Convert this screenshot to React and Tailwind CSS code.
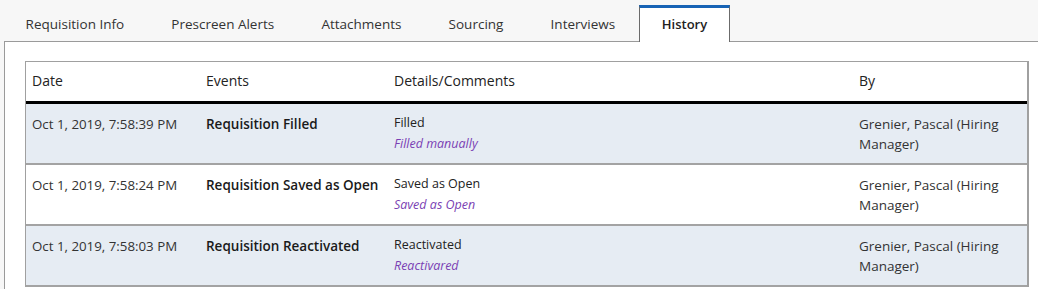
import React from "react";

const tabs = ["Requisition Info", "Prescreen Alerts", "Attachments", "Sourcing", "Interviews", "History"];

const rows = [
  { date: "Oct 1, 2019, 7:58:39 PM", event: "Requisition Filled", detail: "Filled", comment: "Filled manually", by: "Grenier, Pascal (Hiring Manager)", shade: true },
  { date: "Oct 1, 2019, 7:58:24 PM", event: "Requisition Saved as Open", detail: "Saved as Open", comment: "Saved as Open", by: "Grenier, Pascal (Hiring Manager)", shade: false },
  { date: "Oct 1, 2019, 7:58:03 PM", event: "Requisition Reactivated", detail: "Reactivated", comment: "Reactivared", by: "Grenier, Pascal (Hiring Manager)", shade: true },
];

export default function App() {
  return (
    <div className="w-[1038px] h-[289px] overflow-hidden bg-[#f7f7f7] font-['Open_Sans',sans-serif] text-[#333]">
      <div className="flex items-end h-[41px] pl-[2px]">
        {tabs.map((t) =>
          t === "History" ? (
            <div
              key={t}
              className="relative z-10 -mb-px h-[37px] flex items-center px-[22px] bg-white border-t-[3px] border-t-[#1763b5] border-x border-x-[#6b6b6b] text-[13px] font-semibold text-[#222]"
            >
              {t}
            </div>
          ) : (
            <div key={t} className="h-[36px] flex items-center px-[23.6px] pt-[3px] text-[13.5px] text-[#333]">
              {t}
            </div>
          )
        )}
      </div>
      <div className="ml-[4px] h-[260px] bg-white border-t border-l border-[#9a9a9a] pt-[19px] pl-[20px]">
        <div className="w-[1004px] border-t border-l border-r-2 border-[#a0a0a0] bg-white">
          <div className="grid grid-cols-[173px_188px_465px_175px] h-[42px] border-b-[3px] border-black text-[14px] text-[#222] leading-[20px] pt-[9px]">
            <div className="pl-[6px]">Date</div>
            <div className="pl-[7px]">Events</div>
            <div className="pl-[7px]">Details/Comments</div>
            <div className="pl-[7px]">By</div>
          </div>
          {rows.map((r, i) => (
            <div
              key={i}
              className={`grid grid-cols-[173px_188px_465px_175px] h-[61px] border-b-2 border-[#a3a3a3] pt-[10px] ${r.shade ? "bg-[#e6ecf3]" : "bg-white"}`}
            >
              <div className="pl-[6px] text-[13.3px] leading-[20px] text-[#333]">{r.date}</div>
              <div className="pl-[7px] text-[13.5px] leading-[20px] font-semibold text-[#1a1a1a] whitespace-nowrap">{r.event}</div>
              <div className="pl-[7px] pt-px text-[12.5px]">
                <div className="leading-[16px] text-[#222]">{r.detail}</div>
                <div className="mt-[5px] leading-[16px] italic text-[#7a3fb3]">{r.comment}</div>
              </div>
              <div className="pl-[7px] pr-[8px] text-[13.5px] leading-[20px] text-[#333]">{r.by}</div>
            </div>
          ))}
        </div>
      </div>
    </div>
  );
}
